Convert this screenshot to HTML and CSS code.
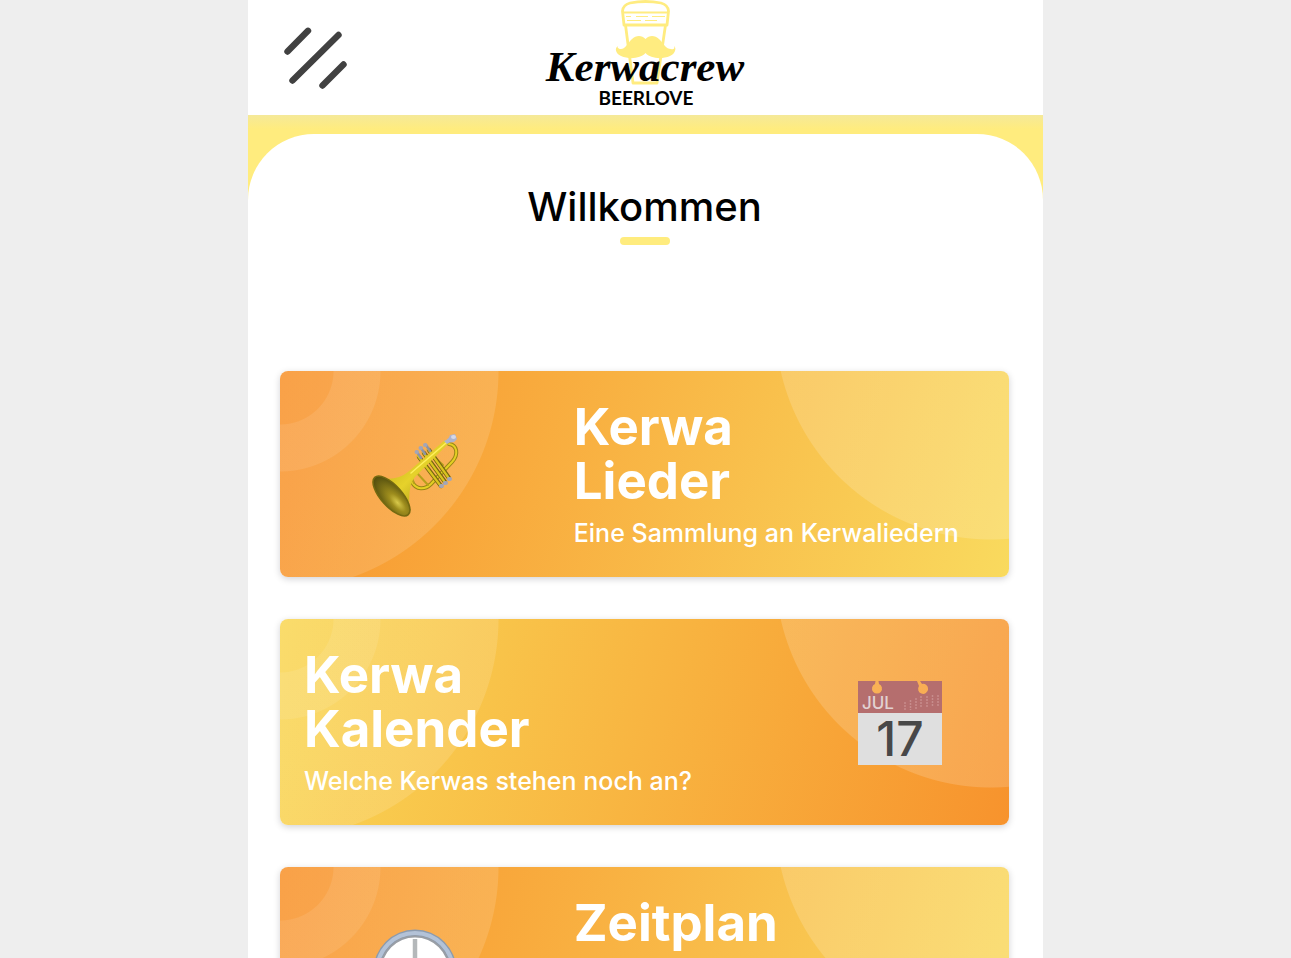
FILE: index.html
```html
<!DOCTYPE html>
<html lang="de">
<head>
<meta charset="utf-8">
<meta name="viewport" content="width=device-width, initial-scale=1">
<title>Kerwacrew</title>
<link rel="stylesheet" href="styles.css">
</head>
<body>
<div class="app">
  <header class="topbar">
    <button class="menu" type="button" aria-label="Menü">
      <svg width="64" height="62" viewBox="0 0 64 62" fill="none" stroke="#414141" stroke-width="6.4" stroke-linecap="round" aria-hidden="true">
        <path d="M4.500 24.500 25 3.800M9.500 53.500 55.500 8M39.500 58.500 60.500 37.500"/>
      </svg>
    </button>
    <a class="logo" href="#" aria-label="Kerwacrew Beerlove">
      <svg width="200" height="110" viewBox="0 0 200 110" aria-hidden="true">
        <g fill="none" stroke="#ffec80" stroke-width="2.800" stroke-linejoin="round">
          <path d="M78 25 76.500 11Q77 5 84 3Q99.500 0 115 3Q122 5 122.500 11L121 25Z"/>
          <path d="M77 12.500H122" stroke-width="1.800"/>
          <path d="M79.500 25 87 83H111L119.500 25"/>
          <path d="M80 16.500H85M90 16.500H102M106 16.500H119M81 20.500H95M99 20.500H111" stroke-width="1"/>
        </g>
        <path fill="#ffec80" d="M99.500 39C96 35 90 35 86 39C81 44 79 49 75 49C72 49 71 47 72 46C68 48 70 54 75 56C84 60 95 58 99.500 53C104 58 115 60 124 56C129 54 131 48 128 46C129 48 128 50 125 49C120 49 118 44 113 39C109 35 103 35 99.500 39Z"/>
        <text class="logo-name" x="99" y="81" text-anchor="middle">Kerwacrew</text>
        <text class="logo-sub" x="100" y="105" text-anchor="middle">BEERLOVE</text>
      </svg>
    </a>
  </header>
  <div class="stage">
    <main class="panel">
      <h1 class="title">Willkommen</h1>
      <nav class="cards">
        <a class="card card-warm" href="#">
          <span class="icon">
            <svg width="84" height="84" viewBox="0 0 84 84" fill="none" stroke-linecap="round" aria-hidden="true">
              <defs>
                <linearGradient id="brass" x1="0" y1="0" x2="1" y2="1"><stop offset="0" stop-color="#b29a12"/><stop offset=".5" stop-color="#e6d22b"/><stop offset="1" stop-color="#887512"/></linearGradient>
                <radialGradient id="bell" cx=".68" cy=".5" r=".65"><stop offset="0" stop-color="#d8c94a"/><stop offset=".35" stop-color="#9e8d1d"/><stop offset="1" stop-color="#55500f"/></radialGradient>
              </defs>
              <path d="M76 11C84 12 86 21 79 29L58 51C52 57 43 57 39 49" stroke="#988515" stroke-width="4"/>
              <path d="M76 11C84 12 86 21 79 29L58 51C52 57 43 57 39 49" stroke="#e4cf23" stroke-width="2"/>
              <path d="M44 40 55 52M60 23 70 32M44 40Q37 43 41 50" stroke="#b6a01b" stroke-width="2"/>
              <path d="M46 24 68 53M51 20 72 49M56 17 76 45" stroke="#766711" stroke-width="4.400"/>
              <path d="M45 23 67 52M50 19 71 48M55 16 75 44" stroke="#d9c41f" stroke-width="2.200"/>
              <path d="M3 44Q23 49 35 39L72 7 75 11 42 44Q34 53 37 80Z" fill="url(#brass)"/>
              <path d="M38 40 73 10" stroke="#fff05c" stroke-width="1.500"/>
              <ellipse cx="18.500" cy="63" rx="25" ry="10.500" transform="rotate(48 18.500 63)" fill="url(#bell)" stroke="#746910" stroke-width="1.600"/>
              <path d="M44 19 48 25M48 15 52 21M53 12 57 18" stroke="#8f94a5" stroke-width="2.500"/>
              <path d="M43.500 19H44M47.500 15H48M52 12H52.500M68 53H69M72 50H73M76 46H77" stroke="#a4a6b8" stroke-width="4"/>
              <path d="M71 8Q76 6 77 2L82 1 84 6 81 9Q76 9 74 11Z" fill="#aeb3cd"/>
              <ellipse cx="80.500" cy="4" rx="2.500" ry="2" fill="#d5d8e8"/>
            </svg>
          </span>
          <span class="copy">
            <span class="name">Kerwa<br>Lieder</span>
            <span class="note">Eine Sammlung an Kerwaliedern</span>
          </span>
        </a>
        <a class="card card-cool" href="#">
          <span class="copy">
            <span class="name">Kerwa<br>Kalender</span>
            <span class="note">Welche Kerwas stehen noch an?</span>
          </span>
          <span class="icon">
            <svg width="84" height="84" viewBox="0 0 84 84" aria-hidden="true">
              <path fill="#dfdfdf" d="M0 32H84V84H0Z"/>
              <path fill="#b56e6e" fill-rule="evenodd" d="M0 0H17.500L17 3A5 5 0 1 0 21 3L20.500 0H59L61 5A5 5 0 1 0 64 3L62 0H84V32H0Z"/>
              <path d="M47 21V29M52.500 19V29M58 17V28M63 15V27M69 15V26M74.500 14V25M80 14V25" stroke="#c78c8c" stroke-width="1.500" stroke-dasharray="2 1"/>
              <text class="cal-month" x="4" y="28">JUL</text>
              <text class="cal-day" x="42" y="75" text-anchor="middle">17</text>
            </svg>
          </span>
        </a>
        <a class="card card-warm" href="#">
          <span class="icon">
            <svg width="84" height="84" viewBox="0 0 84 84" aria-hidden="true">
              <circle cx="42" cy="42" r="41.500" fill="#8c9bae"/>
              <circle cx="42" cy="42" r="38" fill="none" stroke="#b3c2d7" stroke-width="4"/>
              <circle cx="42" cy="42" r="34.500" fill="#fff" stroke="#999ea5" stroke-width="2"/>
              <path d="M42 10V44L42 62" stroke="#b4b8ba" stroke-width="4.500"/>
            </svg>
          </span>
          <span class="copy">
            <span class="name">Zeitplan</span>
          </span>
        </a>
      </nav>
    </main>
  </div>
</div>
</body>
</html>
```
FILE: styles.css
```css
* {
  box-sizing: border-box;
}

body {
  margin: 0;
  background: #eee;
  color: #000;
  font-family: Inter, "Liberation Sans", sans-serif;
}

.app {
  display: flex;
  flex-direction: column;
  max-width: 795px;
  height: 100vh;
  margin: 0 auto;
  overflow: hidden;
  background: #fff;
}

.topbar {
  display: grid;
  grid-template-columns: 1fr auto 1fr;
  flex: none;
  align-items: center;
  height: 115px;
  padding: 0 35px;
}

.menu {
  justify-self: start;
  padding: 0;
  border: 0;
  background: none;
}

.menu svg,
.logo svg,
.icon svg {
  display: block;
  overflow: visible;
}

.logo {
  align-self: start;
  color: #000;
}

.logo-name {
  font: italic bold 43px "Liberation Serif", serif;
}

.logo-sub {
  font: 700 19px Lato, sans-serif;
}

.stage {
  flex: 1;
  padding-top: 19px;
  background: linear-gradient(#f5e999, #ffec7e 14px);
}

.panel {
  min-height: 100%;
  padding: 48px 34px 42px 32px;
  border-radius: 66px 66px 0 0;
  background: #fff;
}

.title {
  display: flex;
  flex-direction: column;
  align-items: center;
  margin: 0 0 126px;
  font-size: 40px;
  font-weight: 500;
  line-height: 50px;
}

.title::after {
  width: 50px;
  height: 8px;
  margin-top: 5px;
  border-radius: 4px;
  background: #ffec7e;
  content: "";
}

.cards {
  display: grid;
  gap: 42px;
}

.card {
  display: grid;
  min-height: 206px;
  border-radius: 8px;
  box-shadow: 0 2px 7px rgba(0, 0, 30, 0.18);
  color: #fff;
  text-decoration: none;
}

.card-warm {
  --base: linear-gradient(105deg, #f8932d, #f9da5e);
  grid-template-columns: minmax(0, 37fr) minmax(0, 63fr);
}

.card-cool {
  --base: linear-gradient(105deg, #f9d755, #f7932d);
  grid-template-columns: minmax(0, 70fr) minmax(0, 30fr);
}

.card-warm,
.card-cool {
  background:
    radial-gradient(circle at 0 0, transparent 53px, rgba(255, 255, 255, 0.09) 54px, rgba(255, 255, 255, 0.09) 100px, transparent 101px),
    radial-gradient(circle at 0 0, rgba(255, 255, 255, 0.13) 218px, transparent 219px),
    radial-gradient(circle at calc(100% - 18px) -47px, rgba(255, 255, 255, 0.16) 215px, transparent 216px),
    var(--base);
}

.icon {
  display: grid;
  place-items: center;
  padding-top: 2px;
}

.copy {
  display: flex;
  flex-direction: column;
  gap: 8px;
  padding: 29px 24px 27px;
  white-space: nowrap;
}

.name {
  font-size: 51px;
  font-weight: 700;
  line-height: 54px;
}

.note {
  font-size: 25px;
  font-weight: 500;
  line-height: 34px;
}

.cal-month {
  fill: #e2d2d2;
  font: 500 17px Inter, sans-serif;
}

.cal-day {
  fill: #484848;
  font: 500 48px Inter, sans-serif;
}
```
